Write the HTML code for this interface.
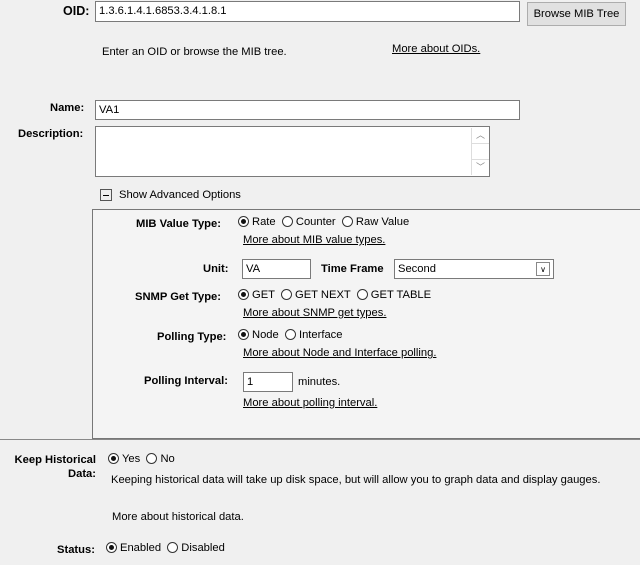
<!DOCTYPE html><html><head><style>
body{margin:0;width:640px;height:565px;background:#f0f0f0;font-family:"Liberation Sans",Arial,sans-serif;font-size:11.2px;color:#000;position:relative;overflow:hidden}
.a{position:absolute;white-space:nowrap}
.b{font-weight:bold}
.in{position:absolute;background:#fff;border:1px solid #7a7a7a;box-sizing:border-box;padding:3px 3px;font-size:11.2px}
u{text-decoration:underline}
.r{display:inline-block;width:11px;height:11px;border:1px solid #333;border-radius:50%;box-sizing:border-box;vertical-align:-2px;margin-right:3px;position:relative;background:#fff}
.r.on:after{content:"";position:absolute;left:2px;top:2px;width:5px;height:5px;border-radius:50%;background:#111}
</style></head><body>
<div class="a b" style="left:63px;top:4px;font-size:12.5px">OID:</div>
<div class="in" style="left:95px;top:1px;width:425px;height:21px">1.3.6.1.4.1.6853.3.4.1.8.1</div>
<div class="a" style="left:527px;top:2px;width:99px;height:24px;border:1px solid #adadad;background:#e1e1e1;text-align:center;line-height:22px;box-sizing:border-box">Browse MIB Tree</div>
<div class="a" style="left:102px;top:46px">Enter an OID or browse the MIB tree.</div>
<div class="a" style="left:392px;top:43px"><u>More about OIDs.</u></div>
<div class="a b" style="left:50px;top:102px">Name:</div>
<div class="in" style="left:95px;top:100px;width:425px;height:20px">VA1</div>
<div class="a b" style="left:18px;top:128px">Description:</div>
<div class="in" style="left:95px;top:126px;width:395px;height:51px"></div>
<div class="a" style="left:471px;top:128px;width:17px;height:47px;border-left:1px solid #ddd;background:#fff">
<div style="height:15px;border-bottom:1px solid #ddd;text-align:center;color:#888;font-size:9px;line-height:15px">︿</div>
<div style="position:absolute;bottom:0;width:17px;height:15px;border-top:1px solid #ddd;text-align:center;color:#888;font-size:9px;line-height:15px">﹀</div></div>
<div class="a" style="left:100px;top:189px;width:12px;height:12px;border:1px solid #555;background:#eee;box-sizing:border-box"><div style="margin:5px 2px 0;height:1px;background:#000"></div></div>
<div class="a" style="left:119px;top:189px">Show Advanced Options</div>
<div class="a" style="left:92px;top:209px;width:560px;height:230px;border:1px solid #777;background:#f4f4f4;box-sizing:border-box"></div>
<div class="a" style="left:0;top:439px;width:640px;height:1px;background:#888"></div>
<div class="a b" style="left:136px;top:218px">MIB Value Type:</div>
<div class="a" style="left:238px;top:216px"><span class="r on"></span>Rate &nbsp;<span class="r"></span>Counter &nbsp;<span class="r"></span>Raw Value</div>
<div class="a" style="left:243px;top:234px"><u>More about MIB value types.</u></div>
<div class="a b" style="left:203px;top:263px">Unit:</div>
<div class="in" style="left:242px;top:259px;width:69px;height:20px">VA</div>
<div class="a b" style="left:321px;top:263px">Time Frame</div>
<div class="in" style="left:394px;top:259px;width:160px;height:20px">Second</div>
<div class="a" style="left:536px;top:262px;width:14px;height:14px;border:1px solid #888;box-sizing:border-box;background:#fff;font-size:8px;text-align:center;line-height:13px">∨</div>
<div class="a b" style="left:135px;top:291px">SNMP Get Type:</div>
<div class="a" style="left:238px;top:289px"><span class="r on"></span>GET &nbsp;<span class="r"></span>GET NEXT &nbsp;<span class="r"></span>GET TABLE</div>
<div class="a" style="left:243px;top:307px"><u>More about SNMP get types.</u></div>
<div class="a b" style="left:157px;top:331px">Polling Type:</div>
<div class="a" style="left:238px;top:329px"><span class="r on"></span>Node &nbsp;<span class="r"></span>Interface</div>
<div class="a" style="left:243px;top:347px"><u>More about Node and Interface polling.</u></div>
<div class="a b" style="left:144px;top:375px">Polling Interval:</div>
<div class="in" style="left:243px;top:372px;width:50px;height:20px">1</div>
<div class="a" style="left:298px;top:376px">minutes.</div>
<div class="a" style="left:243px;top:397px"><u>More about polling interval.</u></div>
<div class="a b" style="left:4px;top:453px;text-align:right;width:92px;line-height:14px;white-space:normal">Keep Historical Data:</div>
<div class="a" style="left:108px;top:453px"><span class="r on"></span>Yes &nbsp;<span class="r"></span>No</div>
<div class="a" style="left:111px;top:474px">Keeping historical data will take up disk space, but will allow you to graph data and display gauges.</div>
<div class="a" style="left:112px;top:511px">More about historical data.</div>
<div class="a b" style="left:57px;top:544px">Status:</div>
<div class="a" style="left:106px;top:542px"><span class="r on"></span>Enabled &nbsp;<span class="r"></span>Disabled</div>
</body></html>
